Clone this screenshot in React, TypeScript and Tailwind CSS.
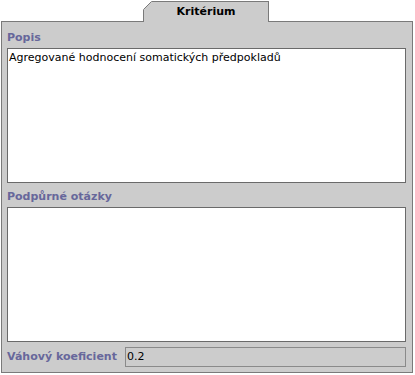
export default function App() {
  const labelFont = { fontFamily: '"DejaVu Sans", Verdana, sans-serif' };
  return (
    <div className="h-[375px] w-[415px] bg-white pl-[1px] pr-[2px] pt-[1px]" style={labelFont}>
      <div className="flex h-[21px] items-stretch">
        <div className="w-[142px] border-b border-[#7a7a7a]" />
        <div className="relative flex w-[126px] items-center justify-center border-l border-r border-t border-[#7a7a7a] bg-[#cccccc] text-[11px] font-bold text-black">
          <svg className="absolute -left-px -top-px" width="9" height="9" viewBox="0 0 9 9">
            <path d="M0 0H9V0L0 9Z" fill="#ffffff" />
            <path d="M0.5 8.5L8.5 0.5" stroke="#7a7a7a" strokeWidth="1" />
          </svg>
          <span className="pt-[1px]">Kritérium</span>
        </div>
        <div className="flex-1 border-b border-[#7a7a7a]" />
      </div>
      <div className="flex h-[351px] flex-col border-b border-l border-r border-[#7a7a7a] bg-[#cccccc] pl-[5px] pr-[6px]">
        <div className="h-[26px] pt-[9px] text-[11px] font-bold leading-[14px] text-[#67679b]">Popis</div>
        <div className="h-[135px] border border-[#6a6a6a] bg-white px-[1px] pt-[2px] text-[11px] leading-[14px] text-black">
          Agregované hodnocení somatických předpokladů
        </div>
        <div className="h-[24px] pt-[7px] text-[11px] font-bold leading-[14px] text-[#67679b]">Podpůrné otázky</div>
        <div className="h-[135px] border border-[#6a6a6a] bg-white" />
        <div className="mt-[5px] flex h-[20px] items-center">
          <div className="w-[118px] text-[11px] font-bold leading-[14px] text-[#67679b]">Váhový koeficient</div>
          <div className="flex h-[20px] flex-1 items-center border border-[#8a8a8a] bg-[#cccccc] px-[1px] text-[11px] text-black">
            0.2
          </div>
        </div>
      </div>
    </div>
  );
}
